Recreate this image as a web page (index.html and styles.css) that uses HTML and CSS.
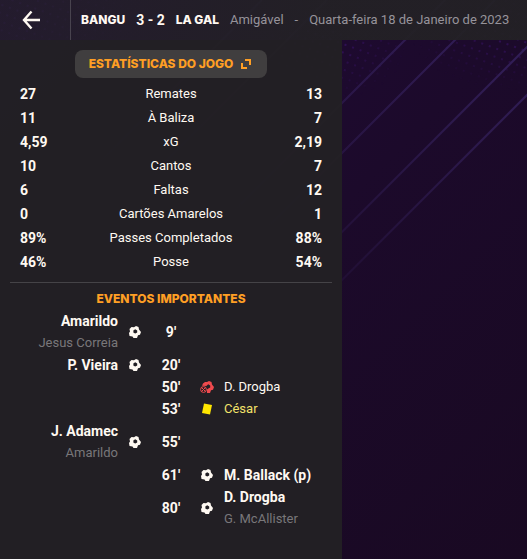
FILE: index.html
```html
<!DOCTYPE html>
<html lang="pt">
<head>
    <meta charset="UTF-8">
    <meta name="viewport" content="width=device-width, initial-scale=1.0">
    <title>Bangu 3 - 2 La Gal</title>
    <link rel="stylesheet" href="styles.css">
</head>
<body>
    <svg class="backdrop" viewBox="0 0 527 559" preserveAspectRatio="xMinYMin slice" aria-hidden="true">
        <defs>
            <linearGradient id="fade" gradientUnits="userSpaceOnUse" x1="527" y1="0" x2="250" y2="330">
                <stop offset="0" stop-color="#34205c"/>
                <stop offset="1" stop-color="#34205c" stop-opacity="0"/>
            </linearGradient>
            <pattern id="dots" width="8" height="8" patternUnits="userSpaceOnUse" patternTransform="rotate(20)">
                <circle cx="4" cy="4" r="1" fill="#3a146c"/>
            </pattern>
            <radialGradient id="spot">
                <stop offset="0" stop-color="#fff"/>
                <stop offset="1" stop-color="#fff" stop-opacity="0"/>
            </radialGradient>
            <mask id="spots">
                <ellipse cx="20" cy="10" rx="130" ry="60" fill="url(#spot)"/>
                <ellipse cx="330" cy="40" rx="80" ry="60" fill="url(#spot)"/>
                <ellipse cx="510" cy="30" rx="100" ry="60" fill="url(#spot)"/>
            </mask>
        </defs>
        <rect width="527" height="559" fill="url(#dots)" mask="url(#spots)"/>
        <g stroke="url(#fade)" stroke-width="2">
            <path d="M262 0L-10 272M327 0L-10 337M445 0L-10 455M495 0L-10 505M574 0L-10 584M622 0L-10 632"/>
        </g>
    </svg>
    <header class="topbar">
        <button type="button" class="back" aria-label="Voltar">
            <svg width="20" height="20" viewBox="0 0 20 20" fill="none" stroke="#fff9f2" stroke-width="2.400"><path d="M19 10H3M10.500 1.500L3 10L10.500 18.500"/></svg>
        </button>
        <div class="match">
            <span class="team">BANGU</span>
            <span class="score">3 - 2</span>
            <span class="team">LA GAL</span>
            <span class="info">Amigável</span>
            <span class="info">-</span>
            <span class="info">Quarta-feira 18 de Janeiro de 2023</span>
        </div>
    </header>
    <main class="panel">
        <button type="button" class="stats-button">ESTATÍSTICAS DO JOGO
            <svg width="10" height="10" viewBox="0 0 10 10" fill="none" stroke="#ff9f24" stroke-width="2"><path d="M4 1H9V6M1 4V9H6"/></svg>
        </button>
        <table class="stats">
            <tr><td>27</td><th scope="row">Remates</th><td>13</td></tr>
            <tr><td>11</td><th scope="row">À Baliza</th><td>7</td></tr>
            <tr><td>4,59</td><th scope="row">xG</th><td>2,19</td></tr>
            <tr><td>10</td><th scope="row">Cantos</th><td>7</td></tr>
            <tr><td>6</td><th scope="row">Faltas</th><td>12</td></tr>
            <tr><td>0</td><th scope="row">Cartões Amarelos</th><td>1</td></tr>
            <tr><td>89%</td><th scope="row">Passes Completados</th><td>88%</td></tr>
            <tr><td>46%</td><th scope="row">Posse</th><td>54%</td></tr>
        </table>
        <section class="events">
            <h2>EVENTOS IMPORTANTES</h2>
            <svg width="0" height="0" class="sprite" aria-hidden="true">
                <symbol id="ball" viewBox="0 0 12 12">
                    <path fill-rule="evenodd" d="M2.500 1L5 1.200L7 0L9.500 1L10 3.500L12 6L11 8.700L9 9.200L8 12H4.500L3.500 10.500L0.500 10L0 7L1 5.500L0.500 3ZM6.200 3.300L4.300 4.500L4.500 6.800L6.300 7.600L8.200 6.500L8.200 4.500Z"/>
                </symbol>
                <symbol id="missed" viewBox="0 0 14 12">
                    <path fill-rule="evenodd" d="M5 1L7 1L9 0L11.500 1L12 3.500L14 6L13 8.700L11 9.200L10 12H7V8.500L8.300 7.600L10.200 6.500L10.200 4.500L8.200 3.300L6.300 5L2 4.800L3 2.500Z"/>
                    <circle cx="3.500" cy="8.500" r="2.900" fill="none" stroke="currentColor"/>
                    <path d="M1.500 6.500L5.500 10.500M5.500 6.500L1.500 10.500" stroke="currentColor"/>
                </symbol>
            </svg>
            <div class="event home">
                <div class="names"><b>Amarildo</b><small>Jesus Correia</small></div>
                <svg class="icon"><use href="#ball"/></svg>
                <span class="minute">9'</span>
            </div>
            <div class="event home">
                <div class="names"><b>P. Vieira</b></div>
                <svg class="icon"><use href="#ball"/></svg>
                <span class="minute">20'</span>
            </div>
            <div class="event away">
                <span class="minute">50'</span>
                <svg class="icon missed"><use href="#missed"/></svg>
                <div class="names">D. Drogba</div>
            </div>
            <div class="event away booked">
                <span class="minute">53'</span>
                <svg class="icon" viewBox="0 0 12 12"><path d="M3 0.500L11 2L9 11.500L1 10Z"/></svg>
                <div class="names">César</div>
            </div>
            <div class="event home">
                <div class="names"><b>J. Adamec</b><small>Amarildo</small></div>
                <svg class="icon"><use href="#ball"/></svg>
                <span class="minute">55'</span>
            </div>
            <div class="event away">
                <span class="minute">61'</span>
                <svg class="icon"><use href="#ball"/></svg>
                <div class="names"><b>M. Ballack (p)</b></div>
            </div>
            <div class="event away">
                <span class="minute">80'</span>
                <svg class="icon"><use href="#ball"/></svg>
                <div class="names"><b>D. Drogba</b><small>G. McAllister</small></div>
            </div>
        </section>
    </main>
</body>
</html>
```
FILE: styles.css
```css
* { margin: 0; padding: 0; box-sizing: border-box; }
body { font-family: Roboto, "Liberation Sans", sans-serif; font-size: 13px; line-height: 22px; color: #fff9f2; background: linear-gradient(135deg, #220a3a, #1c0a2b 50%, #190922); min-height: 100vh; display: flex; flex-direction: column; }
button { font: inherit; color: inherit; border: none; background: none; cursor: pointer; }
.backdrop { position: absolute; top: 0; left: 0; width: 100%; height: 100%; z-index: -1; }

/* Top bar */
.topbar { display: flex; height: 40px; background: linear-gradient(90deg, rgba(36, 33, 42, 0.75), rgba(35, 33, 37, 0.94) 60%); }
.back { width: 71px; padding-right: 8px; display: flex; align-items: center; justify-content: center; border-right: 1px solid #48434e; }
.match { display: flex; align-items: center; gap: 11px; padding-left: 10px; white-space: nowrap; }
.team, .stats-button, .events h2 { font-family: Inter, sans-serif; font-size: 12px; font-weight: 800; }
.score { font-size: 14px; font-weight: 700; }
.info { color: #96939a; }

/* Left panel */
.panel { width: 64.9%; flex-grow: 1; padding: 10px 10px 28px; display: flex; flex-direction: column; background: rgba(35, 33, 36, 0.95); }
.stats-button { align-self: center; display: flex; align-items: center; gap: 8px; height: 28px; padding: 0 16px 0 14px; border-radius: 8px; background: #403e3f; color: #ff9f24; white-space: nowrap; }
.stats { width: 100%; margin-top: 4px; padding: 0 10px 8px; border-spacing: 0; border-bottom: 1px solid #454347; table-layout: fixed; }
.stats td, .stats th { height: 24px; }
.stats td { width: 20%; font-size: 14px; font-weight: 700; }
.stats td:last-child { text-align: right; }
.stats th { font-weight: 400; text-align: center; }

/* Events */
.events h2 { margin: 5px 0 0; text-align: center; color: #ff9f24; }
.sprite { position: absolute; }
.event { display: grid; grid-template-columns: 1fr 34px 38px 34px 1fr; align-items: center; margin: 0 -10px; }
.away .minute { grid-column: 3; }
.home .names { text-align: right; }
.names { white-space: nowrap; }
.names b, .names small { display: block; }
.names b { font-size: 14px; }
.names small { font-size: 13px; color: #79777a; }
.minute { font-size: 14px; font-weight: 700; text-align: center; }
.icon { width: 12px; height: 12px; justify-self: center; fill: currentColor; }
.missed { width: 14px; color: #f04a4e; }
.booked .icon { fill: #ffe600; }
.booked .names { color: #f2e26a; }
```
